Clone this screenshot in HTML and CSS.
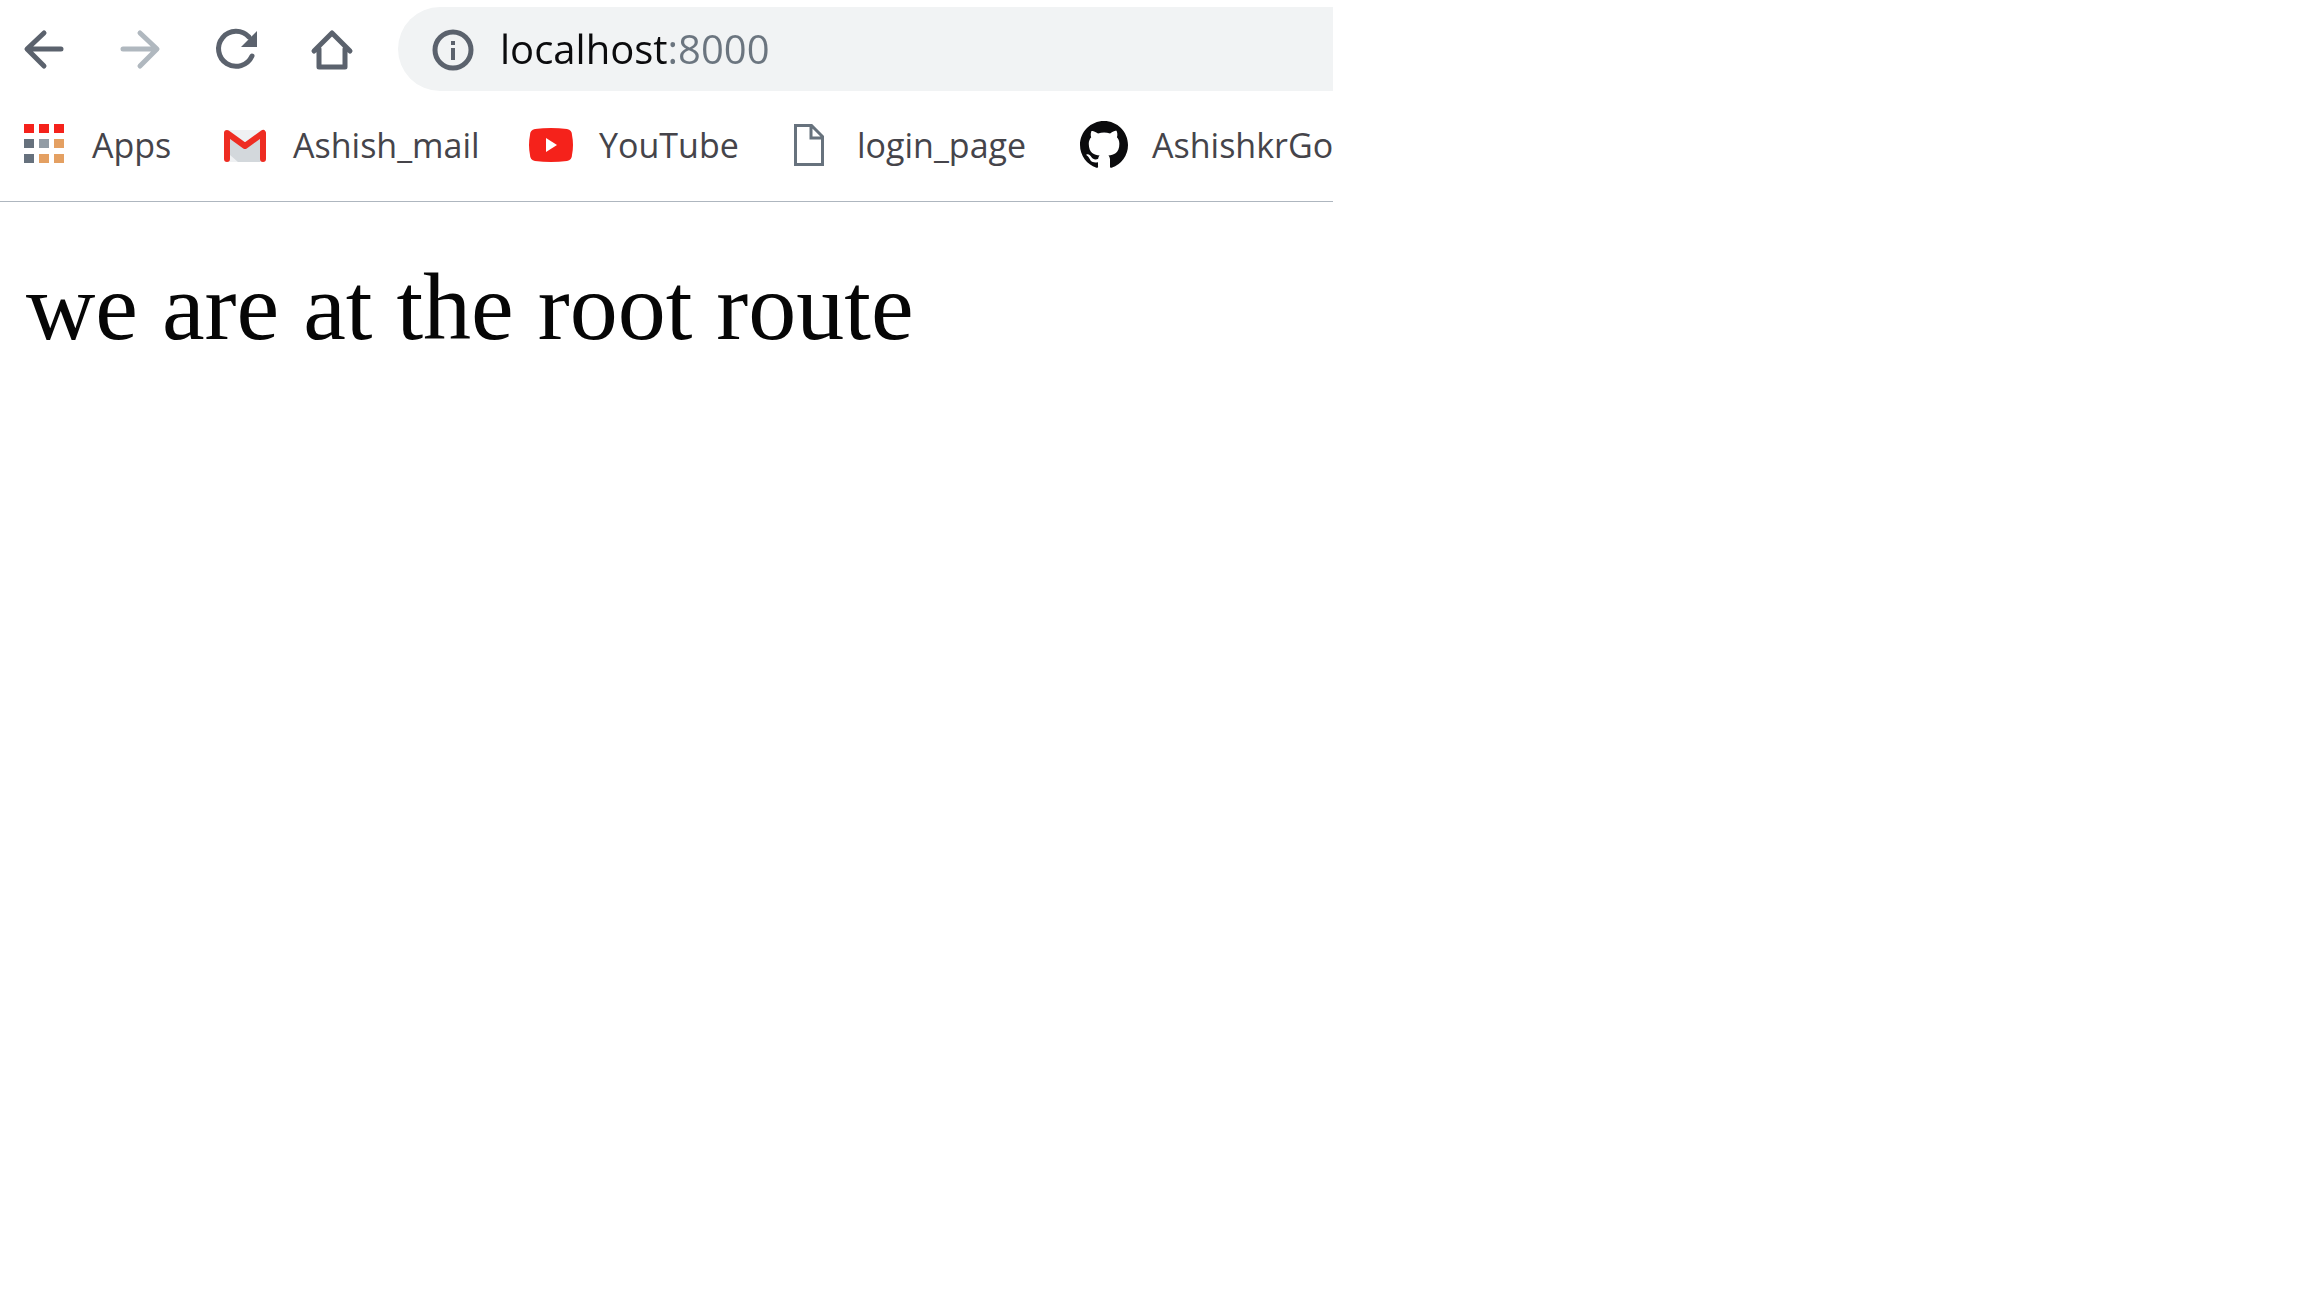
FILE: index.html
```html
<!DOCTYPE html>
<html lang="en">
<head>
<meta charset="utf-8">
<title>localhost:8000</title>
<link rel="stylesheet" href="styles.css">
</head>
<body>
<div class="browser">
  <header class="chrome">
    <div class="toolbar">
      <nav class="controls" aria-label="Browser">
        <button class="control" type="button" aria-label="Back">
          <svg class="icon line" viewBox="0 0 48 48"><path d="M41 24H8M24 8L7 24l17 17"/></svg>
        </button>
        <button class="control faded" type="button" aria-label="Forward">
          <svg class="icon line" viewBox="0 0 48 48"><path d="M7 24h33M24 8l17 16-17 17"/></svg>
        </button>
        <button class="control" type="button" aria-label="Reload">
          <svg class="icon line" viewBox="0 0 48 48"><path d="M40 31A17.500 17.500 0 1 1 37 12"/><path class="solid" d="M45 6v16H29z"/></svg>
        </button>
        <button class="control" type="button" aria-label="Home">
          <svg class="icon line" viewBox="0 0 48 48"><path d="M6 26L24 8l18 18M11 24v18h26V24"/></svg>
        </button>
      </nav>
      <div class="address">
        <svg class="icon line" viewBox="0 0 48 48"><circle cx="25" cy="25" r="18"/><path class="solid" d="M23 16h4v4h-4zM23 23h4v12h-4z"/></svg>
        <input class="url" type="text" value="localhost:8000" aria-label="Address" spellcheck="false">
      </div>
    </div>
    <nav class="bookmarks" aria-label="Bookmarks">
      <a class="bookmark" href="#">
        <svg class="icon" viewBox="0 0 48 48"><path fill="#f5221b" d="M4 3h10v9H4zM19 3h10v9H19zM34 3h10v9H34z"/><path fill="#66717d" d="M4 18h10v9H4zM4 33h10v9H4z"/><path fill="#929ca5" d="M19 18h10v9H19z"/><path fill="#e4a062" d="M34 18h10v9H34zM19 33h10v9H19zM34 33h10v9H34z"/></svg>
        <span>Apps</span>
      </a>
      <a class="bookmark" href="#">
        <svg class="icon" viewBox="0 0 48 48"><path fill="#eff1f3" d="M5 9h38v32H5z"/><path fill="#d3d8dc" d="M9 15l15 12 15-12v26H17L9 34z"/><path d="M6 38V12l18 13 18-13v26" fill="none" stroke="#ee2c22" stroke-width="6" stroke-linecap="round" stroke-linejoin="round"/></svg>
        <span>Ashish_mail</span>
      </a>
      <a class="bookmark" href="#">
        <svg class="icon" viewBox="0 0 48 48"><path fill="#f5221b" d="M8 8q16-2 32 0 5 1 5 6 2 10 0 20 0 5-5 6-16 2-32 0-5-1-5-6-2-10 0-20 0-5 5-6z"/><path fill="#fff" d="M19 17l11 7-11 7z"/></svg>
        <span>YouTube</span>
      </a>
      <a class="bookmark" href="#">
        <svg class="icon" viewBox="0 0 48 48"><path d="M10.500 4.500h16l11 11v28h-27zM26 5v12h12" fill="none" stroke="#67727d" stroke-width="3"/></svg>
        <span>login_page</span>
      </a>
      <a class="bookmark" href="#">
        <svg class="icon" viewBox="0 0 16 16"><path fill="#0b0b0d" d="M8 0C3.580 0 0 3.580 0 8c0 3.540 2.290 6.530 5.470 7.590.4.070.55-.17.55-.38 0-.19-.01-.82-.01-1.490-2.010.37-2.530-.49-2.690-.94-.09-.23-.48-.94-.82-1.130-.28-.15-.68-.52-.01-.53.63-.01 1.080.58 1.230.82.72 1.210 1.870.87 2.330.66.07-.52.28-.87.51-1.070-1.780-.2-3.640-.89-3.640-3.950 0-.87.31-1.590.82-2.150-.08-.2-.36-1.020.08-2.120 0 0 .67-.21 2.200.82.64-.18 1.320-.27 2-.27s1.360.09 2 .27c1.530-1.040 2.200-.82 2.200-.82.44 1.100.16 1.920.08 2.120.51.56.82 1.270.82 2.150 0 3.070-1.870 3.750-3.650 3.950.29.25.54.73.54 1.480 0 1.070-.01 1.930-.01 2.200 0 .21.15.46.55.38A8.010 8.010 0 0 0 16 8c0-4.420-3.580-8-8-8z"/></svg>
        <span>AshishkrGo</span>
      </a>
    </nav>
  </header>
  <main class="page">we are at the root route</main>
</div>
</body>
</html>
```
FILE: styles.css
```css
* {
  box-sizing: border-box;
}

body {
  margin: 0;
  background: #fff;
}

.browser {
  max-width: 1333px;
}

.chrome {
  border-bottom: 1px solid #aeb6bf;
  font-family: "Open Sans", "Noto Sans", sans-serif;
}

.toolbar {
  display: flex;
  gap: 42px;
  padding: 7px 0 0 20px;
}

.controls {
  display: flex;
  align-items: center;
  gap: 48px;
}

.control {
  display: flex;
  padding: 0;
  border: 0;
  background: none;
  color: #5b626d;
}

.faded {
  color: #b0b8bf;
}

.icon {
  flex: none;
  width: 48px;
  height: 48px;
}

.line {
  fill: none;
  stroke: currentColor;
  stroke-width: 5;
  stroke-linecap: round;
  stroke-linejoin: round;
}

.solid {
  fill: currentColor;
  stroke: none;
}

.address {
  display: flex;
  flex: 1;
  align-items: center;
  gap: 24px;
  height: 84px;
  padding-left: 30px;
  border-radius: 42px 0 0 42px;
  background: #f1f3f4;
  color: #5b626d;
}

/* The host is black and the port is grey. */
.url {
  flex: 1;
  min-width: 0;
  padding: 0;
  border: 0;
  outline: 0;
  background: linear-gradient(90deg, #0b0b0d 167px, #6b757f 167px);
  background-clip: text;
  -webkit-background-clip: text;
  color: transparent;
  font: 40px/56px "Open Sans", "Noto Sans", sans-serif;
}

.bookmarks {
  display: grid;
  grid-template-columns: 201px 306px 258px 295px 1fr;
  padding: 30px 0 32px 20px;
}

.bookmark {
  display: flex;
  align-items: center;
  gap: 24px;
  color: #45444a;
  font-size: 34px;
  line-height: 46px;
  text-decoration: none;
  white-space: nowrap;
}

.page {
  padding: 50px 26px;
  color: #060606;
  font: 96px/110px "Liberation Serif", "Times New Roman", serif;
}
```
